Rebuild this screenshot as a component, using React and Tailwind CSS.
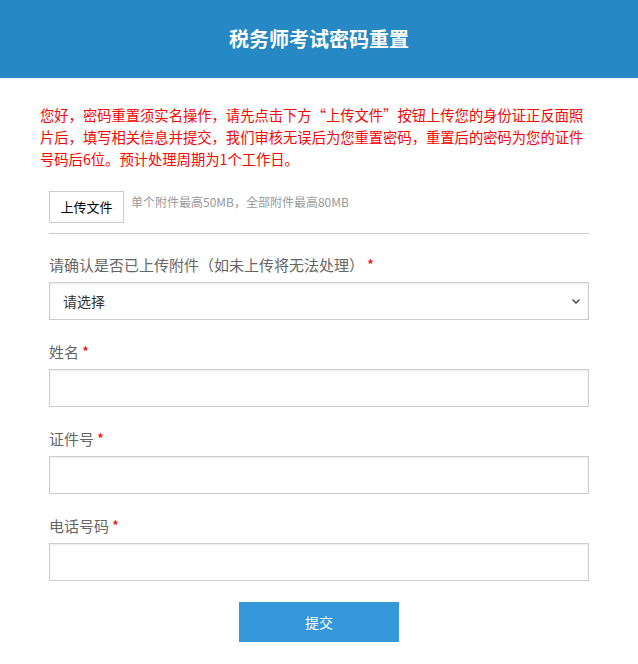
import React from "react";

const fieldFont = {
  fontFamily: '"Microsoft YaHei", "Noto Sans CJK SC", "Liberation Sans", sans-serif',
};

const Label = ({ children }) => (
  <label className="block text-[15px] leading-[22px] text-[#666]">
    {children}
    <span className="text-[#f00] ml-[3px]">*</span>
  </label>
);

const TextField = ({ label }) => (
  <div className="mt-[21px]">
    <Label>{label}</Label>
    <input
      type="text"
      className="mt-[6px] block w-full h-[38px] border border-[#ccc] bg-white px-3 text-[14px] shadow-[inset_0_1px_2px_rgba(0,0,0,0.08)] outline-none"
    />
  </div>
);

export default function App() {
  return (
    <div className="w-[638px] min-h-[664px] bg-white" style={fieldFont}>
      <div className="h-[78px] bg-[#2688c4] flex items-center justify-center">
        <h1 className="text-white text-[20px] font-bold">税务师考试密码重置</h1>
      </div>

      <div className="px-[49px]">
        <p className="pt-[26px] -ml-[9px] w-[550px] text-[14.3px] leading-[22px] text-[#f00]">
          您好，密码重置须实名操作，请先点击下方“上传文件”按钮上传您的身份证正反面照片后，填写相关信息并提交，我们审核无误后为您重置密码，重置后的密码为您的证件号码后6位。预计处理周期为1个工作日。
        </p>

        <div className="mt-[21px] flex items-start gap-[7px]">
          <button className="h-[32px] w-[75px] border border-[#ccc] bg-white text-[13px] text-black">
            上传文件
          </button>
          <span className="mt-[2px] text-[12px] leading-[18px] text-[#999]">
            单个附件最高50MB，全部附件最高80MB
          </span>
        </div>

        <div className="mt-[10px] border-t border-[#ccc]" />

        <div className="mt-[20px]">
          <Label>请确认是否已上传附件（如未上传将无法处理）</Label>
          <div className="relative mt-[6px]">
            <select className="block w-full h-[38px] appearance-none border border-[#ccc] bg-white pl-[13px] text-[14px] text-[#333] shadow-[inset_0_1px_2px_rgba(0,0,0,0.08)] outline-none">
              <option>请选择</option>
              <option>是</option>
              <option>否</option>
            </select>
            <svg
              className="pointer-events-none absolute right-[8px] top-1/2 -translate-y-1/2"
              width="10"
              height="10"
              viewBox="0 0 10 10"
            >
              <path d="M1.5 3.5 L5 7 L8.5 3.5" fill="none" stroke="#444" strokeWidth="1.4" />
            </svg>
          </div>
        </div>

        <TextField label="姓名" />
        <TextField label="证件号" />
        <TextField label="电话号码" />

        <div className="mt-[21px] flex justify-center pb-[22px]">
          <button className="h-[40px] w-[160px] bg-[#3598db] text-white text-[14px]">
            提交
          </button>
        </div>
      </div>
    </div>
  );
}
